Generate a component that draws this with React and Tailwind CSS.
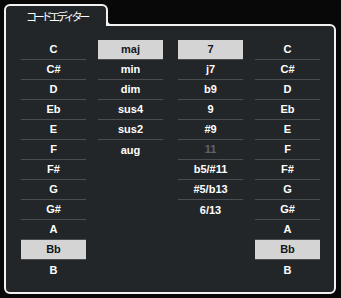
import React from "react";

const roots = ["C", "C#", "D", "Eb", "E", "F", "F#", "G", "G#", "A", "Bb", "B"];
const qualities = ["maj", "min", "dim", "sus4", "sus2", "aug"];
const tensions = ["7", "j7", "b9", "9", "#9", "11", "b5/#11", "#5/b13", "6/13"];

function Column({ items, selected, disabled = [], className = "" }) {
  return (
    <ul className={`w-[65px] flex flex-col ${className}`}>
      {items.map((item, i) => (
        <li
          key={item}
          className={`h-[20px] flex items-center justify-center text-[11px] font-bold leading-none ${
            i < items.length - 1 ? "border-b border-[#4b4e51]" : ""
          } ${
            item === selected
              ? "bg-[#d4d4d4] text-[#141618]"
              : disabled.includes(item)
              ? "text-[#5f6469]"
              : "text-white"
          }`}
        >
          {item}
        </li>
      ))}
    </ul>
  );
}

export default function App() {
  return (
    <div
      className="w-[341px] h-[298px] bg-[#080808] pt-[4px] pl-[4px] flex flex-col"
      style={{ fontFamily: '"Liberation Sans", Arial, sans-serif' }}
    >
      <div className="relative z-10 w-[104px] h-[22px] -mb-[2px] bg-[#232629] border-2 border-b-0 border-[#f2f2f2] rounded-t-[6px] flex items-center pl-[20px]">
        <span
          className="text-[11px] text-white tracking-[-3.3px] leading-none"
          style={{ fontFamily: '"Noto Sans CJK JP", sans-serif' }}
        >
          コードエディター
        </span>
        {/* concave corner where the tab meets the panel */}
        <div className="absolute left-full bottom-0 w-[6px] h-[6px] bg-[#080808] border-l-2 border-b-2 border-[#f2f2f2] rounded-bl-[5px]" />
      </div>
      <div className="w-[332px] h-[270px] bg-[#232629] border-2 border-[#f2f2f2] rounded-[6px] rounded-tl-none pt-[14px] pl-[15px] flex">
        <Column items={roots} selected="Bb" />
        <Column items={qualities} selected="maj" className="ml-[12px]" />
        <Column items={tensions} selected="7" disabled={["11"]} className="ml-[15px]" />
        <Column items={roots} selected="Bb" className="ml-[12px]" />
      </div>
    </div>
  );
}
